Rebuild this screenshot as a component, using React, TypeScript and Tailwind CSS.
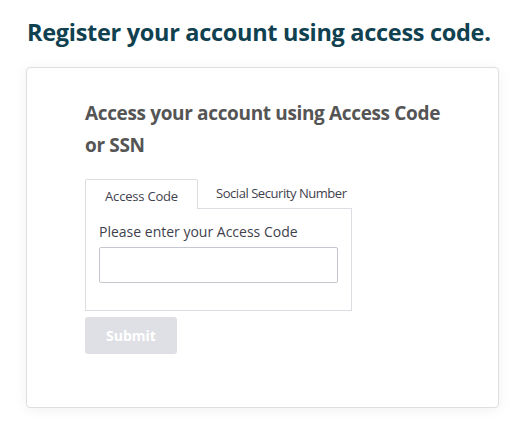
import React from "react";

const App: React.FC = () => {
	const [tab, setTab] = React.useState<"code" | "ssn">("code");

	return (
		<div
			className="min-h-screen w-full bg-white pt-[16px]"
			style={{ fontFamily: '"Open Sans", "Noto Sans", sans-serif' }}
		>
			<h1 className="pl-[27px] text-[23.5px] leading-[32px] font-bold text-[#0f4150] tracking-[-0.3px]">
				Register your account using access code.
			</h1>

			<div className="ml-[26px] mt-[19px] w-[473px] h-[341px] rounded-[4px] border border-[#dedee3] bg-white shadow-[0_2px_14px_rgba(0,0,0,0.06)] pl-[58px] pt-[29px]">
				<h2 className="w-[365px] text-[19px] leading-[32px] font-bold text-[#555555] tracking-[-0.35px]">
					Access your account using Access Code or SSN
				</h2>

				{/* Tabs */}
				<div className="mt-[18px] flex items-end w-[267px]">
					<button
						onClick={() => setTab("code")}
						className={`w-[113px] h-[30px] pt-[4px] text-[13px] tracking-[-0.2px] text-[#3f3f4e] bg-white border border-b-0 rounded-t-[2px] ${
							tab === "code" ? "border-[#dcdce2]" : "border-transparent"
						}`}
					>
						Access Code
					</button>
					<button
						onClick={() => setTab("ssn")}
						className={`flex-1 h-[29px] pl-[18px] whitespace-nowrap text-left text-[13px] tracking-[-0.45px] text-[#3f3f4e] border-b border-[#dcdce2] ${
							tab === "ssn" ? "border border-b-0" : ""
						}`}
					>
						Social Security Number
					</button>
				</div>
				<div className="w-[267px] h-[102px] border border-t-0 border-[#dcdce2] px-[13px] pt-[14px]">
					<label className="block text-[14px] leading-[18px] text-[#3f3f4e]">
						{tab === "code"
							? "Please enter your Access Code"
							: "Please enter your SSN"}
					</label>
					<input
						type="text"
						className="mt-[6px] block w-[239px] h-[36px] rounded-[2px] border border-[#c6c6cf] bg-white px-2 text-[14px] outline-none"
					/>
				</div>

				<button
					disabled
					className="mt-[6px] w-[92px] h-[37px] rounded-[3px] bg-[#dfdfe6] text-[14px] font-bold text-white"
				>
					Submit
				</button>
			</div>
		</div>
	);
};

export default App;
